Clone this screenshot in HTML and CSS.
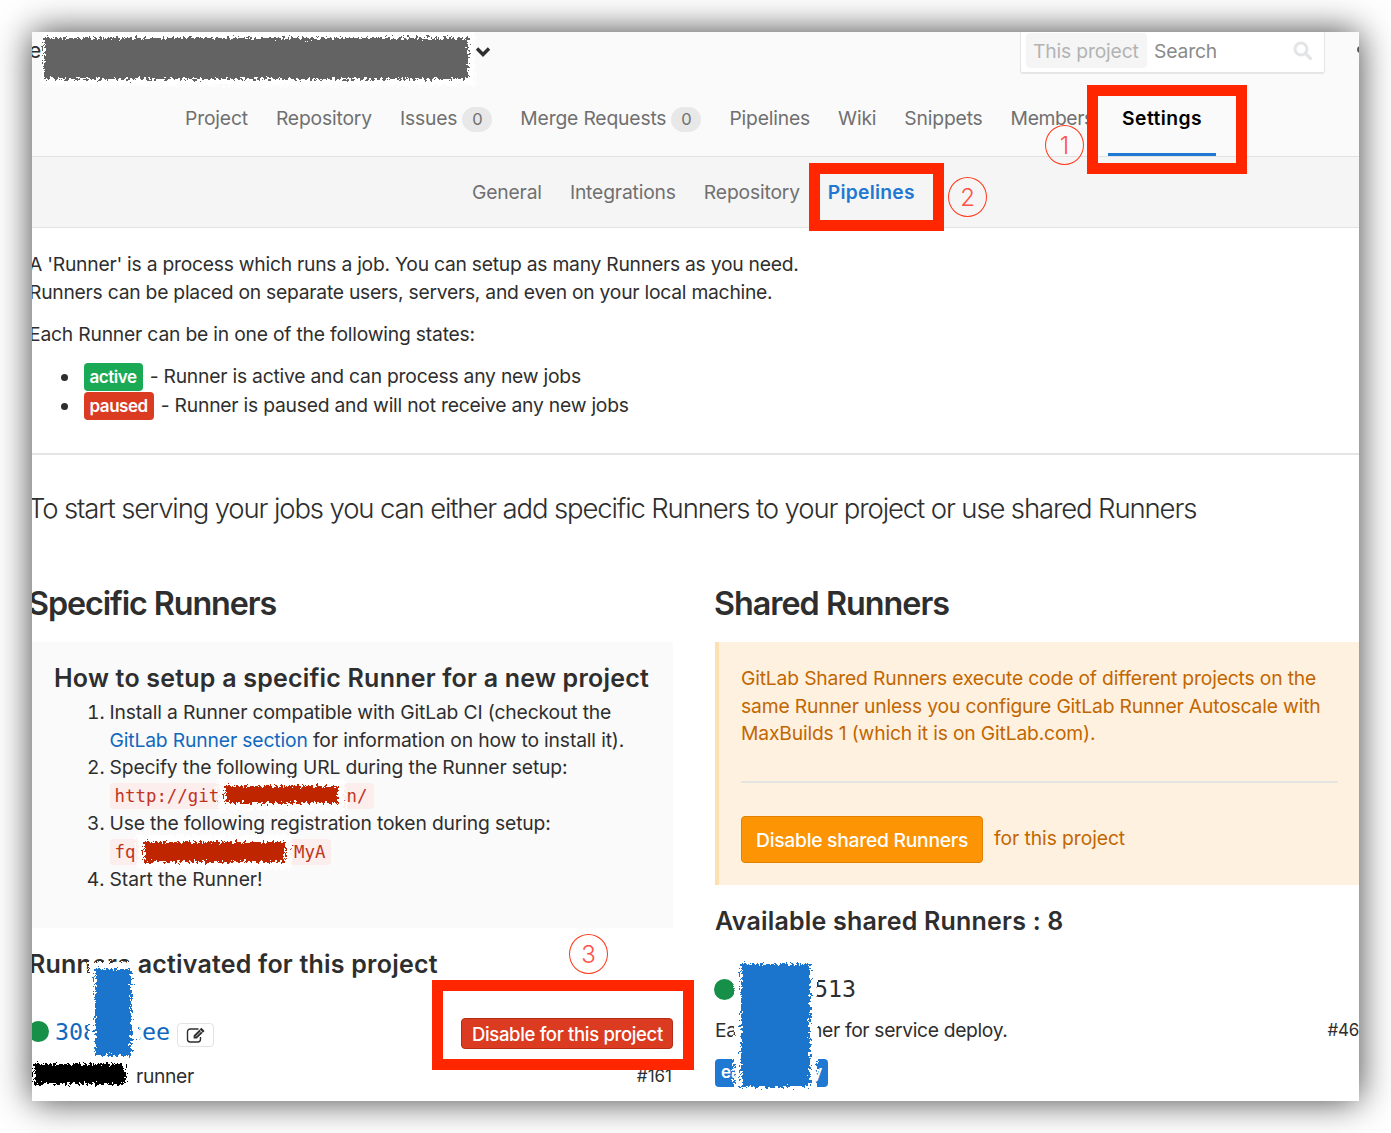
FILE: index.html
```html
<!DOCTYPE html>
<html lang="en">
<head>
<meta charset="utf-8">
<title>Pipelines settings</title>
<link rel="stylesheet" href="styles.css">
</head>
<body>
<svg class="defs" width="0" height="0" aria-hidden="true">
  <filter id="rough" x="-10%" y="-30%" width="120%" height="160%">
    <feTurbulence type="fractalNoise" baseFrequency="0.36" numOctaves="3" seed="4"/>
    <feDisplacementMap in="SourceGraphic" scale="11" xChannelSelector="R" yChannelSelector="G"/>
    <feGaussianBlur stdDeviation="0.5"/>
  </filter>
</svg>
<main class="window">
  <header class="header">
    <div class="topbar">
      <span class="crumb">e</span>
      <svg class="chevron" width="16" height="12" viewBox="0 0 16 12"><path d="M2 2.5l6 6 6-6" fill="none" stroke="#2e2e2e" stroke-width="3.4"/></svg>
      <div class="search">
        <span class="scope">This project</span>
        <span>Search</span>
        <svg class="glass" width="20" height="20" viewBox="0 0 20 20"><circle cx="8" cy="8" r="6" fill="none" stroke="#e3e4e6" stroke-width="3"/><path d="M12.4 12.4l5 5" stroke="#e3e4e6" stroke-width="3.4" stroke-linecap="round"/></svg>
      </div>
      <i class="dot"></i>
    </div>
    <nav class="nav">
      <a>Project</a>
      <a>Repository</a>
      <a>Issues<b class="badge">0</b></a>
      <a>Merge Requests<b class="badge">0</b></a>
      <a>Pipelines</a>
      <a>Wiki</a>
      <a>Snippets</a>
      <a class="members">Members</a>
      <a class="on">Settings</a>
    </nav>
  </header>
  <nav class="subnav">
    <a>General</a>
    <a>Integrations</a>
    <a>Repository</a>
    <a class="on">Pipelines</a>
  </nav>
  <section class="content">
    <p>A 'Runner' is a process which runs a job. You can setup as many Runners as you need.<br>Runners can be placed on separate users, servers, and even on your local machine.</p>
    <p class="each">Each Runner can be in one of the following states:</p>
    <ul class="states">
      <li><span class="tag green">active</span>- Runner is active and can process any new jobs</li>
      <li><span class="tag red">paused</span>- Runner is paused and will not receive any new jobs</li>
    </ul>
    <hr>
    <p class="lead">To start serving your jobs you can either add specific Runners to your project or use shared Runners</p>
    <div class="columns">
      <div>
        <h2>Specific Runners</h2>
        <div class="setup">
          <h3>How to setup a specific Runner for a new project</h3>
          <ol>
            <li>Install a Runner compatible with GitLab CI (checkout the<br><a class="link">GitLab Runner section</a> for information on how to install it).</li>
            <li>Specify the following URL during the Runner setup:<br><code class="url"><span>http://git</span><span>cn/</span></code></li>
            <li>Use the following registration token during setup:<br><code class="token"><span>fq</span><span>YMyA</span></code></li>
            <li class="start">Start the Runner!</li>
          </ol>
        </div>
        <h3 class="activated">Runners activated for this project</h3>
        <div class="runner">
          <i class="status"></i><span class="hash link"><span>308</span><span>cee</span></span>
          <span class="edit"><svg width="20" height="17" viewBox="0 0 20 17"><path d="M12.5 2H4.2A2.7 2.7 0 0 0 1.5 4.7v7.6A2.7 2.7 0 0 0 4.2 15h7.6a2.7 2.7 0 0 0 2.7-2.7V10" fill="none" stroke="#2e2e2e" stroke-width="1.4"/><path d="M7.6 8.4L15.4.8l3.2 3.1-7.8 7.7H7.6z" fill="#2e2e2e"/><path d="M9.8 9.6l5.8-5.8" stroke="#fff" stroke-width=".8"/><path d="M13.5 2.7l3.2 3.1" stroke="#fff" stroke-width=".7"/></svg></span>
          <span class="danger">Disable for this project</span>
        </div>
        <div class="meta left"><span>runner</span><span class="num">#161</span></div>
      </div>
      <div>
        <h2 class="shared-title">Shared Runners</h2>
        <div class="warning">
          <p>GitLab Shared Runners execute code of different projects on the<br>same Runner unless you configure GitLab Runner Autoscale with<br>MaxBuilds 1 (which it is on GitLab.com).</p>
          <hr>
          <div class="action"><span class="orange">Disable shared Runners</span><span class="for">for this project</span></div>
        </div>
        <h3 class="available">Available shared Runners : 8</h3>
        <div class="runner shared"><i class="status"></i><span class="hash">513</span></div>
        <div class="meta right"><span class="ea">Ea</span><span>ner for service deploy.</span><span class="num">#46</span></div>
        <div class="label"><span>ea</span><span>y</span></div>
      </div>
    </div>
  </section>
  <div class="scrub s-title"></div>
  <div class="scrub s-url"></div>
  <div class="scrub s-token"></div>
  <div class="scrub s-hash"></div>
  <div class="scrub s-name"></div>
  <div class="scrub s-shared"></div>
  <div class="frame f1"></div>
  <div class="frame f2"></div>
  <div class="frame f3"></div>
  <div class="step n1">1</div>
  <div class="step n2">2</div>
  <div class="step n3">3</div>
</main>
</body>
</html>
```
FILE: styles.css
```css
* { box-sizing: border-box; }
body { margin: 0; overflow: hidden; background: #fff; font-family: Inter, sans-serif; font-size: 19.3px; line-height: 27.8px; letter-spacing: -.165px; color: #2e2e2e; }
i, b { font-style: normal; font-weight: 400; }
p, h2, h3, ol, ul { margin: 0; padding: 0; }
.defs { position: absolute; }
.window { position: relative; width: 1327px; height: 1069px; margin: 32px; overflow: clip; background: #fff; box-shadow: 0 0 34px rgba(0, 0, 0, .75); }
span, a, p, li, h2, h3 { white-space: nowrap; }

.header { height: 125px; background: #fafafa; border-bottom: 1px solid #e2e2e2; }
.topbar { display: flex; height: 42px; }
.topbar > * { flex: none; }
.crumb { width: 443px; margin-left: -4px; padding: 5px 0 0 1px; font-size: 21px; }
.chevron { margin: 14px 0 0 4px; }
.search { display: flex; align-items: center; width: 305px; height: 42px; margin-left: 529px; border: 1px solid #e5e5e5; border-width: 0 1px 2px; border-radius: 0 0 3px 3px; background: #fff; color: #8a8a8a; }
.scope { width: 121px; height: 35px; margin: 0 7px 3px 5px; padding: 5px 7px 0; border-radius: 4px; background: #f5f5f5; color: #b3b3b3; }
.glass { margin: 0 11px 2px auto; }
.dot { width: 8px; height: 7px; margin: 14px 0 0 32px; border-radius: 50%; background: #555; }
.nav, .subnav { display: flex; color: #707070; }
.nav { height: 82px; padding-left: 139px; }
.nav a { display: flex; align-items: center; padding: 8px 14px 0; }
.nav .members { width: 111.5px; letter-spacing: -.4px; }
.nav a.on { color: #000; font-weight: 600; letter-spacing: .44px; border-bottom: 3px solid #1f78d1; padding-top: 11px; }
.badge { width: 30px; height: 25px; margin-left: 5px; border-radius: 13px; background: #e8e8e8; text-align: center; font-size: 16.5px; line-height: 25px; }
.subnav { height: 71px; padding-left: 426px; background: #f5f5f5; border-bottom: 1px solid #e2e2e2; }
.subnav a { padding: 22px 14px 0; }
.subnav .on { color: #1f78d1; font-weight: 600; letter-spacing: .24px; }

.content { padding-top: 23px; margin-left: -3px; }
.content > p { margin-bottom: 14px; letter-spacing: -.245px; }
.content > .each { letter-spacing: -.2px; }
.states { padding-left: 53.5px; letter-spacing: -.22px; }
.states li { display: flex; height: 29px; position: relative; top: .5px; }
.states li::before { content: ""; width: 7px; height: 7px; margin: 11px 16px 0 -22px; border-radius: 50%; background: #2e2e2e; }
.tag { height: 28px; margin-right: 7px; padding: 0 6px; border-radius: 4px; color: #fff; font-size: 17px; font-weight: 600; line-height: 28px; letter-spacing: -.45px; }
.green { background: #1aaa55; }
.red { background: #db3b21; }
hr { height: 2px; margin: 0; border: 0; background: #e5e5e5; }
.content > hr { margin-top: 32.5px; }
.content > .lead { margin: 34px 0 0; font-size: 27.5px; font-weight: 300; line-height: 38px; letter-spacing: -1.13px; text-indent: -1px; }
.columns { display: grid; grid-template-columns: 644px 644px; column-gap: 42px; margin-top: 55px; }
h2 { margin-left: -1px; font-size: 32.3px; line-height: 44px; font-weight: 600; letter-spacing: -1.1px; }
.shared-title { letter-spacing: -.99px; }
h3 { font-size: 25px; line-height: 34px; font-weight: 600; letter-spacing: .21px; }
.setup { height: 286px; margin-top: 16px; padding: 19px 25px; background: #fafafa; }
.setup ol { padding-left: 55.5px; letter-spacing: -.145px; }
.setup h3 { margin-bottom: 4px; }
.start { letter-spacing: -.05px; }
.link { color: #1068bf; }
code { display: inline-flex; justify-content: space-between; height: 26px; border-radius: 4px; padding: 0 5px; background: #fbeeed; color: #c0341d; font: 17.4px/26px "DejaVu Sans Mono", monospace; letter-spacing: 0; vertical-align: top; margin-top: 1px; }
.url { width: 264px; padding-right: 6px; }
.token { width: 221px; }
.activated { margin-top: 19px; }
.runner { display: flex; align-items: center; height: 42px; margin-top: 30px; }
.status { width: 21px; height: 21px; border-radius: 50%; background: #168f48; }
.runner:not(.shared) .status { margin-left: -1px; }
.hash { display: flex; justify-content: space-between; font: 23.3px/30px "DejaVu Sans Mono", monospace; letter-spacing: 0; }
.hash.link { width: 115px; margin-left: 6px; }
.edit { display: flex; align-items: center; justify-content: center; width: 37px; height: 24px; margin: 7px 0 0 7px; border: 1px solid #e3e3e3; border-radius: 4px; }
.danger { width: 212px; height: 31px; margin: 4px 0 0 auto; padding: 0 10px; border: 1px solid #b52c17; border-radius: 4px; background: #db3b21; color: #fff; font-weight: 500; font-size: 18.5px; line-height: 30px; letter-spacing: -.34px; }
.meta { display: flex; height: 28px; letter-spacing: -.35px; }
.left { padding-left: 107px; margin-top: 10px; }
.right { margin-top: 7px; }
.num { margin-left: auto; font-size: 17px; letter-spacing: 0; }
.left .num { margin-right: 1px; }
.right .num { letter-spacing: -.3px; }
.warning { height: 243px; margin-top: 16px; padding: 23px 21px 0 22px; border-left: 4px solid #fddfb0; background: #fff1e0; color: #c26700; letter-spacing: -.17px; }
.warning hr { margin: 32.5px 0 33.5px; background: #e4e4e2; }
.action { display: flex; align-items: center; gap: 11px; }
.for { letter-spacing: -.08px; margin-top: -2px; }
.orange { width: 242px; height: 47px; padding: 0 14px; border: 1px solid #e08200; border-radius: 4px; background: #fc9403; color: #fff; font-weight: 500; line-height: 46px; letter-spacing: -.28px; }
.available { margin-top: 19px; }
.shared { margin-top: 30.5px; }
.shared .status { margin-left: -1px; }
.shared .hash { margin-left: 79px; }
.ea { width: 96px; }
.label { display: flex; justify-content: space-between; width: 113px; height: 28px; margin-top: 14px; padding: 0 6px; border-radius: 4px; background: #1f78d1; color: #fff; font-size: 17px; font-weight: 600; }

/* scribbled-out areas and call-outs lying over the page */
.scrub { position: absolute; }
.scrub::before, .scrub::after { content: ""; position: absolute; filter: url(#rough); }
.scrub::before { inset: -7px; background: #fff; }
.scrub::after { inset: 0; background: var(--ink); }
.s-title { --ink: #646464; left: 12px; top: 6px; width: 424px; height: 41px; }
.s-title::before { inset: -7px -7px -7px -2px; }
.s-url { --ink: #bf2600; left: 193px; top: 754px; width: 113px; height: 17px; }
.s-token { --ink: #bf2600; left: 112px; top: 810px; width: 141px; height: 20px; }
.s-hash { --ink: #1d74cd; left: 63px; top: 937px; width: 36px; height: 87px; }
.s-name { --ink: #000; left: 2px; top: 1032px; width: 91px; height: 20px; }
.s-shared { --ink: #1d74cd; left: 709px; top: 932px; width: 69px; height: 123px; }
.frame { position: absolute; border: 11px solid #ff2600; }
.f1 { left: 1055px; top: 53px; width: 160px; height: 89px; }
.f2 { left: 777px; top: 131px; width: 135px; height: 68px; }
.f3 { left: 400px; top: 948px; width: 262px; height: 90px; }
.step { position: absolute; width: 39px; height: 40px; border: 1.5px solid #ff3a1c; border-radius: 50%; color: #ff5148; text-align: center; font-size: 24px; font-weight: 300; line-height: 39px; }
.n1 { left: 1013px; top: 93px; }
.n2 { left: 916px; top: 145px; }
.n3 { left: 537px; top: 902px; }
```
